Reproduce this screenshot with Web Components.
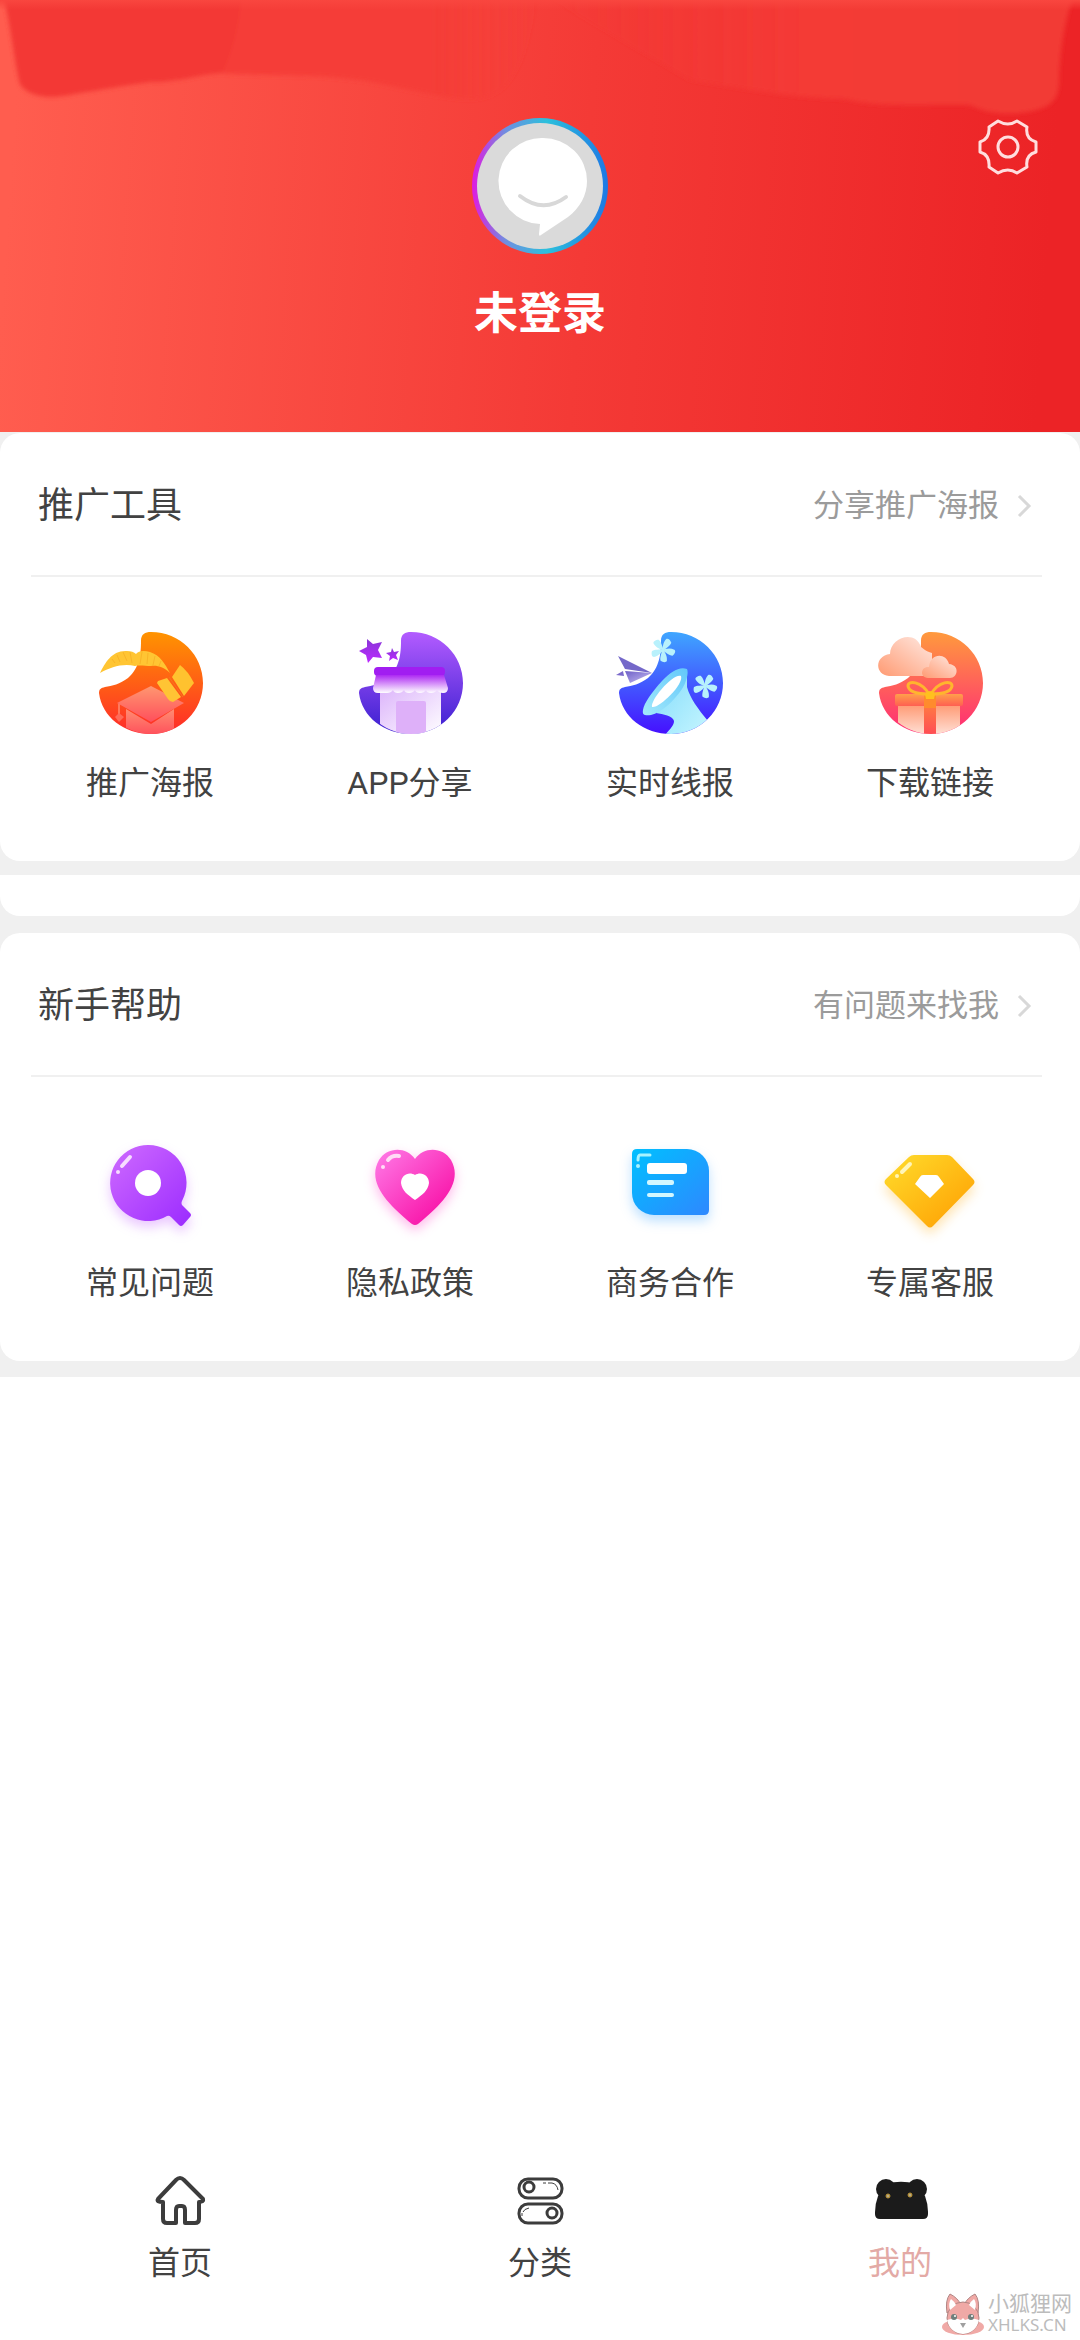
<!DOCTYPE html>
<html lang="zh-CN">
<head>
<meta charset="utf-8">
<meta name="viewport" content="width=device-width, initial-scale=1">
<title>我的</title>
<style>
  body {
    margin: 0;
    background: #ffffff;
    color: #424242;
    font-family: Roboto, "Noto Sans CJK SC", sans-serif;
  }
</style>
</head>
<body>

<mine-page>
  <profile-header slot="header">未登录</profile-header>

  <menu-card heading="推广工具" more="分享推广海报">
    <menu-item icon="poster">推广海报</menu-item>
    <menu-item icon="shop">APP分享</menu-item>
    <menu-item icon="news">实时线报</menu-item>
    <menu-item icon="gift">下载链接</menu-item>
  </menu-card>

  <menu-strip></menu-strip>

  <menu-card heading="新手帮助" more="有问题来找我">
    <menu-item icon="question">常见问题</menu-item>
    <menu-item icon="heart">隐私政策</menu-item>
    <menu-item icon="doc">商务合作</menu-item>
    <menu-item icon="diamond">专属客服</menu-item>
  </menu-card>

  <tab-bar slot="footer">
    <tab-item icon="home">首页</tab-item>
    <tab-item icon="category">分类</tab-item>
    <tab-item icon="bear" active>我的</tab-item>
  </tab-bar>

  <site-mark slot="footer"></site-mark>
</mine-page>

<script>
  // Round base with a bite at the top left, shared by the four tool icons
  const BLOB = "M53 2 C47 2 43 4 43 11 C43 22 42 38 30 48 C22 54 14 56 7 57 C3 58 1 59 1 63 C4 87 26 104 53 104 A52 51 0 0 0 105 53 C105 25 82 2 53 2Z";
  const DISC = `<clipPath id="disc"><ellipse cx="53" cy="53" rx="52" ry="51"/></clipPath>`;

  const gradient = (id, from, to, dir = "0 0 0 1") => {
    const [x1, y1, x2, y2] = dir.split(" ");
    return `<linearGradient id="${id}" x1="${x1}" y1="${y1}" x2="${x2}" y2="${y2}"><stop offset="0" stop-color="${from}"/><stop offset="1" stop-color="${to}"/></linearGradient>`;
  };

  const pinwheel = (x, y) => {
    const blade = "M1 1 C-2 -1 -6 -4 -7 -9 C-7 -11 -4 -12 -1 -11 C1 -8 0 -4 1 1Z";
    return `<g transform="translate(${x} ${y})" fill="#b8f1fc">` +
      [-18, 54, 126, 198, 270].map((a) => `<path d="${blade}" transform="rotate(${a})"/>`).join("") +
      `</g>`;
  };

  const ICONS = {
    poster: [104, `
      <defs>${DISC}${gradient("bg", "#ff9400", "#ff2a2a")}${gradient("cap", "#ff9770", "#ff4f5c")}${gradient("base", "#ff8d72", "#ff525c")}</defs>
      <path d="${BLOB}" fill="url(#bg)"/>
      <path d="M2 43 C7 33 14 20 29 21 C33 21 36 22 38 24 C40 21 46 20 52 22 C62 25 67 34 72 43 C66 37 59 35 53 36 C47 36 42 35 37 36 C25 33 13 37 2 43Z" fill="#ffc533"/>
      <g stroke="#f9b428" stroke-width="1" fill="none">
        <path d="M14 29l3 4M19 25l3 7M25 22l4 9M32 22l2 11M44 22l-2 12M50 23l-1 11M57 26l-2 9M63 31l-2 5"/>
      </g>
      <g clip-path="url(#disc)">
        <path d="M28 79 L53 94 L76 79 V104 H28Z" fill="url(#base)"/>
      </g>
      <path d="M53 56 L86 73 L53 92 L19 73Z" fill="url(#cap)"/>
      <path d="M21 74 V85" stroke="#ff7a5c" stroke-width="2"/>
      <path d="M21 83 L26 87 L21 92 L17 87Z" fill="#ff6a58"/>
      <path d="M60 51 L69 48 L83 67 L75 72 Q72 72 70 69 L59 53Z" fill="#ffc434"/>
      <path d="M74 47 L82 35 Q90 41 96 53 L86 66Z" fill="#ffc22f"/>
      <path d="M71 47 L85 67" stroke="#f5791c" stroke-width="1"/>`],

    shop: [104, `
      <defs>${DISC}${gradient("bg", "#b35cff", "#3a1fd0")}${gradient("awn", "#ad29f3", "#ffffff")}${gradient("wall", "#ffffff", "#dcb4fb", "1 1 0 0")}${gradient("star", "#8a37d8", "#bb28ff")}</defs>
      <path d="${BLOB}" fill="url(#bg)"/>
      <path d="M9 9 L15 14 L24 12 L20 20 L24 28 L15 27 L10 33 L8 25 L1 21 L9 17Z" fill="url(#star)"/>
      <path d="M34 18 L36 22 L41 21 L38 25 L40 30 L35 28 L31 31 L32 26 L28 23 L33 22Z" fill="url(#star)"/>
      <g clip-path="url(#disc)">
        <rect x="22" y="58" width="61" height="48" fill="url(#wall)"/>
        <rect x="38" y="71" width="30" height="36" rx="2" fill="#deb0f9"/>
      </g>
      <rect x="16" y="37" width="71" height="9" rx="4" fill="#a11df1"/>
      <path d="M18 45 H86 L90 58 Q90 63 85 63 Q81 63 79 60 Q77 63 73 63 Q69 63 68 60 Q66 63 62 63 Q58 63 57 60 Q55 63 51 63 Q47 63 46 60 Q44 63 40 63 Q36 63 35 60 Q33 63 29 63 H20 Q15 63 15 58Z" fill="url(#awn)"/>`],

    news: [104, `
      <defs>${DISC}${gradient("bg", "#3fa6ff", "#4510ff")}${gradient("rim", "#62c8fa", "#a4e9fb", "1 0 0 1")}${gradient("cone", "#84dcfb", "#c6f6ff", "0 0 1 1")}${gradient("plane", "#6d5fc8", "#c9bff2", "0 0 1 1")}</defs>
      <path d="${BLOB}" fill="url(#bg)"/>
      <g clip-path="url(#disc)">
        <path d="M69 42 C68 50 62 60 50 72 L38 83 C45 84 55 86 56 91 C56 96 51 100 46 106 H80 L90 91 C80 79 72 68 69 57Z" fill="url(#cone)"/>
      </g>
      <path d="M69 39 C62 36 53 41 44 51 C34 62 26 73 25 80 C24 85 27 86 33 85 C43 83 56 71 64 59 C68 53 71 43 69 39Z" fill="url(#rim)"/>
      <path d="M63 46 C55 43 32 70 34 77 C40 79 66 55 63 46Z" fill="#ffffff"/>
      ${pinwheel(45, 20)}${pinwheel(87, 56)}
      <path d="M0 26 L34 43 L7 39Z" fill="#7468c9"/>
      <path d="M7 41 L34 43 L12 53Z" fill="url(#plane)"/>
      <path d="M5 41 L6 46 L-2 45Z" fill="#7b6acb"/>`],

    gift: [104, `
      <defs>${DISC}${gradient("bg", "#ff9a3d", "#ff2a76")}${gradient("cloud", "#ff9a72", "#ffe9e2", "0 1 1 0")}${gradient("lid", "#ffa04a", "#ff5f52")}${gradient("box", "#ff9d78", "#ffe3da")}${gradient("band", "#ff8a3c", "#ff4a55")}</defs>
      <path d="${BLOB}" fill="url(#bg)"/>
      <path d="M11 46 C-3 45 -4 26 12 24 C12 8 37 -1 43 17 C46 19 47 21 54 23 L54 37 C53 43 50 46 45 46Z" fill="url(#cloud)"/>
      <path d="M50 48 C41 47 43 36 51 37 C52 23 68 22 71 34 C82 35 80 48 72 48Z" fill="url(#cloud)"/>
      <g clip-path="url(#disc)">
        <rect x="20" y="76" width="62" height="30" fill="url(#box)"/>
        <rect x="46" y="64" width="12" height="42" fill="url(#band)"/>
      </g>
      <rect x="17" y="64" width="68" height="12" rx="2" fill="url(#lid)"/>
      <rect x="46" y="64" width="12" height="14" fill="#ff8b2d"/>
      <g fill="none" stroke="#ffb52e" stroke-width="3">
        <path d="M51 64 C43 51 30 50 30 56 C31 63 43 64 51 64Z"/>
        <path d="M53 64 C61 51 74 50 74 56 C73 63 61 64 53 64Z"/>
      </g>
      <path d="M47 64 Q52 58 57 64 L56 69 H48Z" fill="#ffc01e"/>`],

    question: [104, `
      <defs>${gradient("bg", "#cf6bff", "#9b2bff", "0 0 1 1")}</defs>
      <g class="purple">
        <path d="M50 15 A38 38 0 1 0 69 86 Q71 85 73 87 L81 95 Q83 97 85 95 L92 87 Q94 85 92 83 L84 75 Q83 73 84 71 A38 38 0 0 0 50 15Z" fill="url(#bg)"/>
      </g>
      <circle cx="50" cy="53" r="13" fill="#ffffff"/>
      <path d="M32 27 L24 36" stroke="#f7dcff" stroke-width="4" stroke-linecap="round"/>
      <circle cx="20" cy="42" r="2" fill="#f7dcff"/>`],

    heart: [104, `
      <defs>${gradient("bg", "#ff7ce8", "#f7009c", "0 0 1 1")}</defs>
      <g class="pink">
        <path d="M57 29 C66 16 85 17 93 30 C106 53 83 75 60 94 Q57 96 54 94 C31 75 8 53 21 30 C29 17 48 16 57 29Z" fill="url(#bg)"/>
      </g>
      <path d="M57 45 C63 41 71 45 71 53 C70 61 64 65 57 70 C50 65 44 61 43 53 C43 45 51 41 57 45Z" fill="#ffffff"/>
      <path d="M41 26 Q34 25 30 30" stroke="#ffdcf6" stroke-width="4" stroke-linecap="round" fill="none"/>
      <circle cx="25" cy="37" r="2" fill="#ffdcf6"/>`],

    doc: [104, `
      <defs>${gradient("bg", "#00c0ff", "#2e88ff", "0 0 1 1")}</defs>
      <g class="blue">
        <path d="M19 19 H69 A22 22 0 0 1 91 41 V80 Q91 85 86 85 H36 A22 22 0 0 1 14 63 V24 Q14 19 19 19Z" fill="url(#bg)"/>
      </g>
      <rect x="29" y="33" width="40" height="11" rx="3" fill="#ffffff"/>
      <rect x="29" y="50" width="27" height="5" rx="2" fill="#d2f7ff"/>
      <rect x="29" y="63" width="27" height="4" rx="2" fill="#d2f7ff"/>
      <path d="M32 25 H22 Q20 25 20 30" stroke="#a8f3ff" stroke-width="3" stroke-linecap="round" fill="none"/>
      <circle cx="20" cy="36" r="2" fill="#a8f3ff"/>`],

    diamond: [104, `
      <defs>${gradient("bg", "#ffdd2c", "#ff9c00", "0 0 1 1")}</defs>
      <g class="gold">
        <path d="M36 25 H69 Q72 25 74 27 L95 49 Q98 52 95 55 L55 96 Q52 99 49 96 L8 55 Q5 52 8 49 L31 27 Q33 25 36 25Z" fill="url(#bg)"/>
      </g>
      <path d="M45 45 H58 Q60 45 61 47 L66 54 L52 68 L37 54 L42 47 Q43 45 45 45Z" fill="#ffffff"/>
      <path d="M32 34 L24 42" stroke="#fff5b8" stroke-width="4" stroke-linecap="round"/>
      <circle cx="19" cy="46" r="2" fill="#fff5b8"/>`],

    home: [56, `
      <path d="M28 6 Q30 6 32 8 L51 27 Q52 30 47 30 V47 Q47 51 43 51 H33 V38 Q33 34 30 34 H27 Q24 34 24 38 V51 H15 Q11 51 11 47 V30 Q4 30 6 27 L24 8 Q26 6 28 6Z" fill="none" stroke="#3c3c3c" stroke-width="4" stroke-linejoin="round"/>`],

    category: [56, `
      <g fill="none" stroke="#3c3c3c" stroke-width="3">
        <rect x="7" y="7" width="43" height="19" rx="9"/>
        <rect x="7" y="32" width="43" height="19" rx="9"/>
        <circle cx="17" cy="15" r="5"/>
        <circle cx="40" cy="41" r="5"/>
      </g>
      <g fill="none" stroke="#3c3c3c" stroke-width="1">
        <path d="M31 11 H34 M36 11 H40 Q45 12 46 18"/>
        <path d="M17 36 Q12 37 11 40 M10 41 V44"/>
      </g>`],

    bear: [56, `
      <g fill="#1b1b1b">
        <circle cx="14" cy="17" r="10"/>
        <circle cx="45" cy="17" r="10"/>
        <path d="M16 12 C22 9 36 9 42 12 L53 24 Q56 32 56 40 V42 Q56 47 51 47 H8 Q3 47 3 42 V40 Q3 32 6 24Z"/>
      </g>
      <g fill="#b9ab85" stroke="#b98f2a" stroke-width="1">
        <circle cx="16" cy="24" r="2"/>
        <circle cx="38" cy="23" r="2"/>
      </g>`],

    gear: [60, `
      <g fill="none" stroke="#ffdede" stroke-width="3" stroke-linejoin="round">
        <path d="M39 4 L49 10 Q47 22 58 25 V35 Q47 38 49 50 L39 56 Q30 50 20 56 L11 50 Q12 38 2 35 V25 Q12 22 11 10 L20 4 Q30 10 39 4Z"/>
        <circle cx="30" cy="30" r="10"/>
      </g>`],

    chevron: [24, `
      <path d="M13 2 L23 12 L13 22" fill="none" stroke="#d8d8d8" stroke-width="3"/>`],

    fox: [44, `
      <ellipse cx="22" cy="35" rx="21" ry="8" fill="#f0a9a6"/>
      <g stroke="#b08583" stroke-width="1">
        <path d="M6 21 Q4 8 9 2 Q17 6 20 13Z" fill="#f0a9a6"/>
        <path d="M37 21 Q39 8 34 2 Q26 6 23 13Z" fill="#f0a9a6"/>
        <circle cx="22" cy="26" r="16" fill="#f0a9a6"/>
      </g>
      <path d="M9 18 Q7 11 10 7 Q14 10 15 13Z M34 18 Q36 11 33 7 Q29 10 28 13Z" fill="#ffffff"/>
      <path d="M6 28 Q14 25 20 28 L22 26 L24 28 Q30 25 38 28 Q35 41 22 42 Q9 41 6 28Z" fill="#ffffff"/>
      <circle cx="13" cy="25" r="3" fill="#6f7f7c"/>
      <circle cx="30" cy="25" r="3" fill="#6f7f7c"/>
      <circle cx="14" cy="24" r="1" fill="#ffffff"/>
      <circle cx="31" cy="24" r="1" fill="#ffffff"/>
      <path d="M19 31 H25 L22 36Z" fill="#a0a0a0"/>`],
  };

  class AppIcon extends HTMLElement {
    constructor() {
      super();
      this.attachShadow({ mode: "open" });
    }

    connectedCallback() {
      const [size, shapes] = ICONS[this.getAttribute("name")];

      this.shadowRoot.innerHTML = `
        <style>
          :host {
            display: block;
            flex: none;
            width: ${size}px;
            height: ${size}px;
          }

          svg {
            display: block;
            overflow: visible;
          }

          .purple { filter: drop-shadow(0 6px 6px rgba(190, 80, 255, 0.32)); }
          .pink { filter: drop-shadow(0 5px 6px rgba(255, 60, 200, 0.36)); }
          .blue { filter: drop-shadow(0 6px 6px rgba(50, 160, 255, 0.32)); }
          .gold { filter: drop-shadow(0 6px 6px rgba(255, 180, 40, 0.36)); }
        </style>
        <svg width="${size}" height="${size}" viewBox="0 0 ${size} ${size}" aria-hidden="true">${shapes}</svg>
      `;
    }
  }

  class MinePage extends HTMLElement {
    constructor() {
      super();
      this.attachShadow({ mode: "open" });
      this.shadowRoot.innerHTML = `
        <style>
          :host {
            display: flex;
            flex-direction: column;
            position: relative;
            min-height: 100vh;
          }

          main {
            display: flex;
            flex-direction: column;
            background: #f0f0f0;
            padding: 1px 0 16px;
          }

          footer {
            margin-top: auto;
          }
        </style>
        <slot name="header"></slot>
        <main><slot></slot></main>
        <footer><slot name="footer"></slot></footer>
      `;
    }
  }

  class ProfileHeader extends HTMLElement {
    constructor() {
      super();
      this.attachShadow({ mode: "open" });
      this.shadowRoot.innerHTML = `
        <style>
          :host {
            display: block;
            position: relative;
            background: linear-gradient(94deg, #ff5d4f 2%, #f43a36 54%, #ec2326 96%);
          }

          .smear {
            position: absolute;
            top: 0;
            left: 0;
            width: 100%;
            height: 120px;
          }

          header {
            position: relative;
            display: flex;
            flex-direction: column;
            align-items: center;
            gap: 28px;
            padding: 118px 0 86px;
          }

          .avatar {
            box-sizing: border-box;
            width: 136px;
            height: 136px;
            padding: 5px;
            border-radius: 50%;
            background: linear-gradient(90deg, #e01ae0 0%, #6f8fe0 25%, #2cc0dc 55%, #1e78e4 100%);
          }

          .avatar svg {
            display: block;
          }

          h1 {
            margin: 0;
            color: #ffffff;
            font-size: 44px;
            font-weight: 700;
            line-height: 64px;
          }

          button {
            position: absolute;
            top: 117px;
            right: 42px;
            padding: 0;
            border: 0;
            background: none;
            cursor: pointer;
          }
        </style>
        <svg class="smear" viewBox="0 0 1080 120" preserveAspectRatio="none" aria-hidden="true">
          <defs>
            <linearGradient id="left" x1="0" x2="1">
              <stop offset="0" stop-color="#f53e38"/>
              <stop offset="0.8" stop-color="#f53d37"/>
              <stop offset="1" stop-color="#f53d37" stop-opacity="0"/>
            </linearGradient>
            <linearGradient id="right" x1="0" x2="1">
              <stop offset="0" stop-color="#f43a36" stop-opacity="0"/>
              <stop offset="0.5" stop-color="#f43a36"/>
              <stop offset="1" stop-color="#f23b36"/>
            </linearGradient>
            <linearGradient id="top" x2="0" y2="1">
              <stop offset="0" stop-color="#f9463f"/>
              <stop offset="1" stop-color="#f9463f" stop-opacity="0"/>
            </linearGradient>
            <filter id="soft"><feGaussianBlur stdDeviation="2"/></filter>
          </defs>
          <g filter="url(#soft)">
            <path d="M2 -10 C12 30 14 60 20 84 C28 96 45 98 62 96 C100 90 120 86 150 82 C180 82 200 74 220 73 C250 76 300 74 340 78 C390 82 430 98 470 99 C510 98 525 70 540 -10Z" fill="url(#left)"/>
            <path d="M2 -10 C12 30 14 60 20 84 C28 96 45 98 62 96 C100 90 120 86 150 82 C180 82 200 74 222 73 C234 50 240 20 242 -10Z" fill="#f33935"/>
            <path d="M535 -10 L690 80 C740 88 790 98 845 99 C880 108 930 104 970 105 C985 112 1000 115 1020 113 C1045 110 1058 104 1059 84 C1060 50 1064 20 1076 -10Z" fill="url(#right)"/>
          </g>
          <rect width="1080" height="10" fill="url(#top)"/>
        </svg>
        <header>
          <div class="avatar">
            <svg width="126" height="126" viewBox="0 0 126 126" role="img" aria-label="头像">
              <circle cx="63" cy="63" r="63" fill="#dadada"/>
              <path d="M66 15 A43 43 0 1 0 63 101 L62 111 Q62 114 64 112 L91 94 C103 85 110 72 110 58 A44 43 0 0 0 66 15Z" fill="#ffffff"/>
              <path d="M43 73 Q66 91 89 74" fill="none" stroke="#d8d8d8" stroke-width="4" stroke-linecap="round"/>
            </svg>
          </div>
          <h1><slot></slot></h1>
          <button type="button" aria-label="设置"><app-icon name="gear"></app-icon></button>
        </header>
      `;
    }
  }

  class MenuCard extends HTMLElement {
    constructor() {
      super();
      this.attachShadow({ mode: "open" });
    }

    connectedCallback() {
      this.shadowRoot.innerHTML = `
        <style>
          :host {
            display: block;
            background: #ffffff;
            border-radius: 20px;
          }

          .head {
            display: flex;
            align-items: center;
            justify-content: space-between;
            height: 138px;
            margin: 0 38px 0 31px;
            padding: 4px 12px 0 7px;
            border-bottom: 2px solid #f0f0f0;
          }

          h2 {
            margin: 0;
            font-size: 36px;
            font-weight: 400;
            line-height: 48px;
          }

          .more {
            display: flex;
            align-items: center;
            gap: 7px;
            color: #9b9b9b;
            font-size: 31px;
            line-height: 48px;
            text-decoration: none;
          }

          .grid {
            display: grid;
            grid-template-columns: repeat(4, 1fr);
            padding: 53px 20px 54px;
          }
        </style>
        <section>
          <div class="head">
            <h2>${this.getAttribute("heading")}</h2>
            <a class="more" href="#">
              ${this.getAttribute("more")}
              <app-icon name="chevron"></app-icon>
            </a>
          </div>
          <div class="grid"><slot></slot></div>
        </section>
      `;
    }
  }

  // Bottom edge of an empty card between the two menus
  class MenuStrip extends HTMLElement {
    constructor() {
      super();
      this.attachShadow({ mode: "open" });
      this.shadowRoot.innerHTML = `
        <style>
          :host {
            display: block;
            height: 41px;
            margin: 14px 0 17px;
            background: #ffffff;
            border-radius: 0 0 20px 20px;
          }
        </style>
      `;
    }
  }

  class MenuItem extends HTMLElement {
    constructor() {
      super();
      this.attachShadow({ mode: "open" });
    }

    connectedCallback() {
      this.shadowRoot.innerHTML = `
        <style>
          :host {
            display: block;
          }

          a {
            display: flex;
            flex-direction: column;
            align-items: center;
            gap: 25px;
            color: inherit;
            font-size: 32px;
            line-height: 48px;
            text-decoration: none;
          }
        </style>
        <a href="#">
          <app-icon name="${this.getAttribute("icon")}"></app-icon>
          <span><slot></slot></span>
        </a>
      `;
    }
  }

  class TabBar extends HTMLElement {
    constructor() {
      super();
      this.attachShadow({ mode: "open" });
      this.shadowRoot.innerHTML = `
        <style>
          :host {
            display: block;
          }

          nav {
            display: grid;
            grid-template-columns: repeat(3, 1fr);
            padding: 16px 0 53px;
          }
        </style>
        <nav><slot></slot></nav>
      `;
    }
  }

  class TabItem extends HTMLElement {
    constructor() {
      super();
      this.attachShadow({ mode: "open" });
    }

    connectedCallback() {
      this.shadowRoot.innerHTML = `
        <style>
          :host {
            display: block;
          }

          :host([active]) {
            color: #e3aaa6;
          }

          a {
            display: flex;
            flex-direction: column;
            align-items: center;
            gap: 11px;
            color: inherit;
            font-size: 32px;
            line-height: 48px;
            text-decoration: none;
          }
        </style>
        <a href="#">
          <app-icon name="${this.getAttribute("icon")}"></app-icon>
          <span><slot></slot></span>
        </a>
      `;
    }
  }

  class SiteMark extends HTMLElement {
    constructor() {
      super();
      this.attachShadow({ mode: "open" });
      this.shadowRoot.innerHTML = `
        <style>
          :host {
            display: flex;
            align-items: center;
            gap: 3px;
            position: absolute;
            right: 8px;
            bottom: 4px;
            color: #bcbcbc;
            font-size: 21px;
            line-height: 22px;
          }

          span {
            display: block;
          }

          .domain {
            font-family: "Noto Sans", sans-serif;
            font-size: 17px;
            line-height: 20px;
          }
        </style>
        <app-icon name="fox"></app-icon>
        <div>
          <span>小狐狸网</span>
          <span class="domain">XHLKS.CN</span>
        </div>
      `;
    }
  }

  customElements.define("app-icon", AppIcon);
  customElements.define("mine-page", MinePage);
  customElements.define("profile-header", ProfileHeader);
  customElements.define("menu-card", MenuCard);
  customElements.define("menu-strip", MenuStrip);
  customElements.define("menu-item", MenuItem);
  customElements.define("tab-bar", TabBar);
  customElements.define("tab-item", TabItem);
  customElements.define("site-mark", SiteMark);
</script>
</body>
</html>
